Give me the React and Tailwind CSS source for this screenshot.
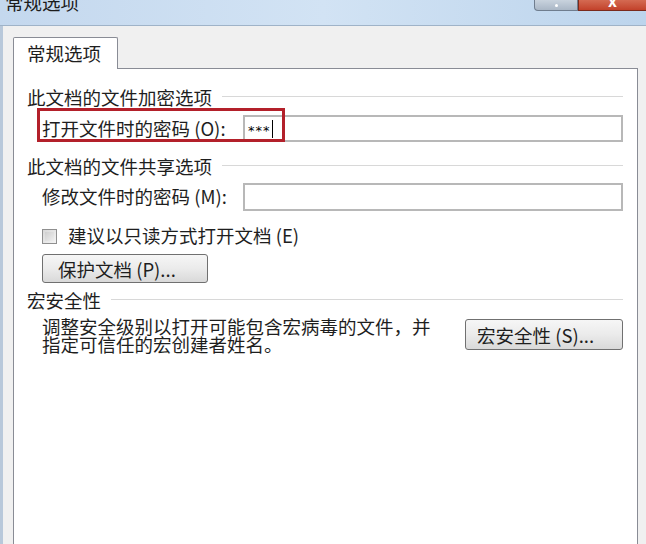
import React from 'react'

const font = { fontFamily: '"Noto Sans CJK SC", "Noto Sans", sans-serif' }

const GroupHeader = ({ title, className }) => (
  <div className={'flex items-center h-[20px] ' + className}>
    <span className="leading-[20px] whitespace-nowrap">{title}</span>
    <div className="flex-1 ml-[10px] border-t border-[#d8d8d8] border-b-white border-b h-0"></div>
  </div>
)

const App = () => {
  return (
    <div className="w-[646px] h-[544px] bg-[#f0f0f0] text-[18.5px] text-[#1e1e1e] overflow-hidden flex flex-col" style={font}>
      {/* title bar */}
      <div className="h-[26px] shrink-0 bg-gradient-to-r from-[#c4d8ee] via-[#d2e3f4] to-[#bcd4ec] border-b border-[#9fb3c8] flex justify-between overflow-hidden">
        <div className="pl-[5px] -mt-[9px] leading-[22px] text-[#1c1c1c]">常规选项</div>
        <div className="flex items-start">
          <div className="w-[44px] h-[11px] bg-gradient-to-b from-[#c9d3de] to-[#aab7c6] border border-t-0 border-[#6f7d8e] rounded-bl-[4px] flex justify-center items-start">
            <div className="w-[3px] h-[3px] bg-white rounded-full mt-[4px]"></div>
          </div>
          <div className="w-[68px] h-[11px] bg-gradient-to-b from-[#d46a52] to-[#c2412a] border-b border-l border-[#7a2a1c] flex justify-center items-start overflow-hidden">
            <span className="text-white text-[16px] leading-[16px] -mt-[8px] font-bold">x</span>
          </div>
        </div>
      </div>

      {/* body */}
      <div className="flex-1 flex border-l-[3px] border-[#b8c8da]">
        <div className="flex-1 flex flex-col pl-[10px] pr-[8px] pt-[11px]">
          {/* tab */}
          <div className="flex">
            <div className="w-[105px] h-[32px] bg-white border border-b-0 border-[#898c95] rounded-t-[2px] pl-[13px] leading-[30px] -mb-px relative z-10">
              常规选项
            </div>
          </div>

          {/* panel */}
          <div className="flex-1 bg-white border border-[#898c95] border-b-0 pl-[13px] pr-[14px] pt-[18px]">
            <GroupHeader title="此文档的文件加密选项" />

            <div className="relative flex items-center h-[27px] mt-[8px] pl-[15px]">
              <span className="w-[201px] whitespace-nowrap">打开文件时的密码 (O):</span>
              <div className="flex-1 h-[27px] border-2 border-[#b8b8b8] bg-white flex items-center pl-[3px]">
                <span className="text-[13px] leading-[13px] mt-[3px] tracking-[1px] text-black" style={{ fontFamily: '"DejaVu Sans", sans-serif' }}>***</span>
                <span className="w-px h-[18px] bg-black ml-[1px]"></span>
              </div>
              <div className="absolute left-[10px] top-[-7px] w-[248px] h-[34px] border-[3px] border-[#b3202a] pointer-events-none"></div>
            </div>

            <GroupHeader title="此文档的文件共享选项" className="mt-[14px]" />

            <div className="flex items-center h-[28px] mt-[7px] pl-[15px]">
              <span className="w-[201px] whitespace-nowrap">修改文件时的密码 (M):</span>
              <div className="flex-1 h-[28px] border-2 border-[#b8b8b8] bg-white"></div>
            </div>

            <div className="flex items-center h-[20px] mt-[15px] pl-[15px]">
              <div className="w-[15px] h-[15px] border border-[#8f8f8f] bg-gradient-to-br from-[#d8d8d8] to-[#f4f4f4] p-[2px]">
                <div className="w-full h-full bg-gradient-to-br from-[#cfcfcf] to-[#eeeeee]"></div>
              </div>
              <span className="ml-[11px] whitespace-nowrap">建议以只读方式打开文档 (E)</span>
            </div>

            <div className="mt-[8px] pl-[15px]">
              <button className="w-[166px] h-[29px] border border-[#707070] rounded-[3px] bg-gradient-to-b from-[#f6f6f6] via-[#ebebeb] to-[#d9d9d9] text-left pl-[15px] leading-[26px] text-[#1e1e1e] whitespace-nowrap">
                保护文档 (P)...
              </button>
            </div>

            <GroupHeader title="宏安全性" className="mt-[7px]" />

            <div className="flex items-start justify-between mt-[7px] pl-[15px]">
              <p className="leading-[18px] w-[410px]">
                调整安全级别以打开可能包含宏病毒的文件，并<br />指定可信任的宏创建者姓名。
              </p>
              <button className="w-[158px] h-[31px] mt-[2px] border border-[#707070] rounded-[3px] bg-gradient-to-b from-[#f6f6f6] via-[#ebebeb] to-[#d9d9d9] text-left pl-[11px] leading-[28px] text-[#1e1e1e] whitespace-nowrap">
                宏安全性 (S)...
              </button>
            </div>
          </div>
        </div>
      </div>
    </div>
  )
}

export default App
